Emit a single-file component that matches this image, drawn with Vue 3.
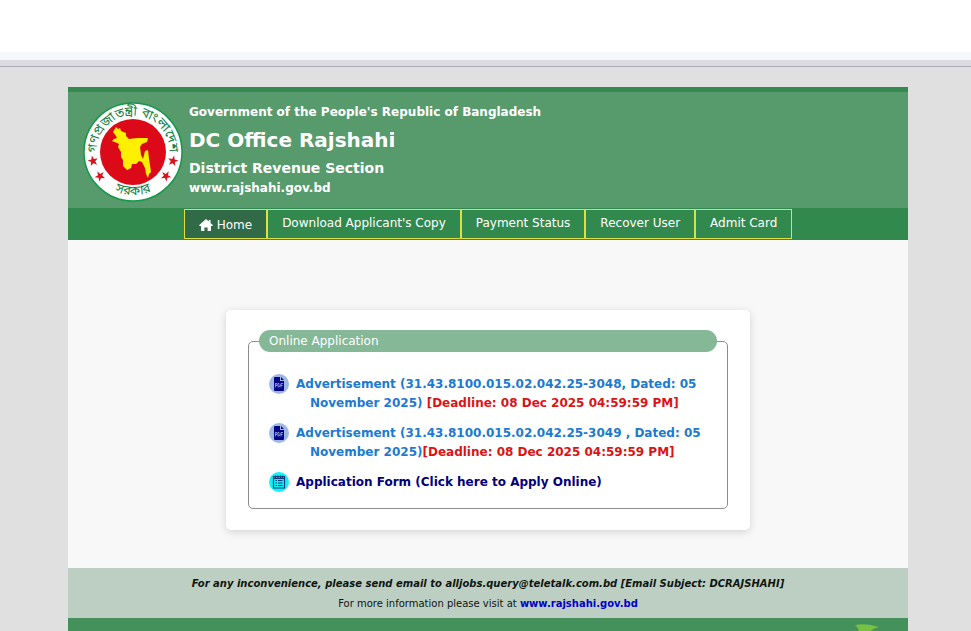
<template>
  <div class="shell">
    <div class="topbar">
      <div class="topbar__tabs"></div>
      <div class="topbar__edge"></div>
    </div>

    <div class="page">
      <header class="header">
        <svg class="header__seal" viewBox="0 0 100 100" role="img" aria-label="Government seal">
          <defs>
            <path id="arc-top" d="M14 56 A36.500 36.500 0 1 1 86 56" />
            <path id="arc-bottom" d="M7 50 A43 43 0 0 0 93 50" />
          </defs>
          <circle cx="50" cy="50" r="49" fill="#fff" stroke="#16984a" stroke-width="1.500" />
          <circle cx="50" cy="50" r="33" fill="#dc0a18" />
          <path
            fill="#ffef00"
            d="M33 25 L35 27 L37 26 L38 29 L43 31 L43 34 L46 37 L54 36 L65 36 L64 40 L59 42 L57 45 L58 53 L60 57 L62 49 L65 48 L66 57 L67 63 L68 70 L66 72 L65 76 L63 72 L62 66 L59 60 L56 59 L53 62 L49 62 L48 66 L44 68 L40 64 L40 58 L38 55 L38 50 L35 45 L36 42 L34 41 L29 39 L31 37 L34 36 L33 34 L30 30 Z"
          />
          <g fill="#d9141e">
            <path
              v-for="star in stars"
              :key="star.x + '-' + star.y"
              :transform="`translate(${star.x} ${star.y}) rotate(${star.turn})`"
              d="M0 -5.500 L1.300 -1.700 L5.200 -1.700 L2.100 .7 L3.200 4.500 L0 2.200 L-3.200 4.500 L-2.100 .7 L-5.200 -1.700 L-1.300 -1.700 Z"
            />
          </g>
          <text class="header__script">
            <textPath href="#arc-top" startOffset="50%" text-anchor="middle">গণপ্রজাতন্ত্রী বাংলাদেশ</textPath>
          </text>
          <text class="header__script">
            <textPath href="#arc-bottom" startOffset="50%" text-anchor="middle">সরকার</textPath>
          </text>
        </svg>
        <div class="header__titles">
          <p class="header__gov">Government of the People's Republic of Bangladesh</p>
          <h1 class="header__office">DC Office Rajshahi</h1>
          <h2 class="header__section">District Revenue Section</h2>
          <p class="header__site">www.rajshahi.gov.bd</p>
        </div>
      </header>

      <nav class="nav">
        <a
          v-for="item in menu"
          :key="item.label"
          class="nav__item"
          :class="{ 'nav__item--active': item.active }"
          href="#"
        >
          <svg v-if="item.active" class="nav__icon" viewBox="0 0 14 12" aria-hidden="true">
            <path
              fill="currentColor"
              d="M7 0 L9.800 2.500 V1 H11.500 V4 L14 6.300 L13.200 7 H12 V11.300 Q12 12 11.300 12 H8.600 V8.500 H5.400 V12 H2.700 Q2 12 2 11.300 V7 H.8 L0 6.300 Z"
            />
          </svg>
          {{ item.label }}
        </a>
      </nav>

      <main class="main">
        <section class="card">
          <fieldset class="box">
            <legend class="box__title">Online Application</legend>
            <ul class="list">
              <li v-for="ad in adverts" :key="ad.text" class="list__row">
                <svg class="list__icon" viewBox="0 0 20 20" aria-hidden="true">
                  <circle cx="10" cy="10" r="10" fill="#9db9e3" />
                  <path fill="#00008b" d="M6 3 H11 V7 H15 V16 Q15 17 14 17 H6 Q5 17 5 16 V4 Q5 3 6 3 Z M12 3 L15 6 H12 Z" />
                  <path
                    fill="none"
                    stroke="#9db9e3"
                    stroke-width=".8"
                    d="M6.400 13.500 V9.500 H8 V11.500 H6.400 M9 9.500 V13 H10 L11 12 V10.500 L10 9.500 H9 M12 13.500 V9.500 H14 M12 11.500 H13.600"
                  />
                </svg>
                <a class="list__link" href="#">
                  {{ ad.text }}<span class="list__deadline">{{ ad.deadline }}</span>
                </a>
              </li>
              <li class="list__row">
                <svg class="list__icon" viewBox="0 0 20 20" aria-hidden="true">
                  <circle cx="10" cy="10" r="10" fill="#0ff2f8" />
                  <path
                    fill="none"
                    stroke="#0a3b7c"
                    stroke-width="1.200"
                    d="M4.500 4.500 H15.500 V16 H4.500 Z M5 6.300 H15 M6.500 3.500 V6 M9 3.500 V6 M11.500 3.500 V6 M13.500 3.500 V6"
                  />
                  <path fill="none" stroke="#0a3b7c" d="M6.500 8.500 H8 M9 8.500 H13.500 M6.500 11 H8 M9 11 H13.500 M6.500 13.500 H8 M9 13.500 H13.500" />
                </svg>
                <a class="list__link list__link--form" href="#">Application Form (Click here to Apply Online)</a>
              </li>
            </ul>
          </fieldset>
        </section>
      </main>

      <section class="contact">
        <p class="contact__mail">
          For any inconvenience, please send email to alljobs.query@teletalk.com.bd [Email Subject: DCRAJSHAHI]
        </p>
        <p class="contact__more">
          For more information please visit at <a class="contact__link" href="#">www.rajshahi.gov.bd</a>
        </p>
      </section>

      <footer class="footer">
        <svg class="footer__leaf" viewBox="0 0 24 24" aria-hidden="true">
          <path fill="#78c143" d="M0 1 Q12 -1 24 3 Q17 5 15 8 Q10 13 5 16 Q3 12 4 8 Q3 3 0 1 Z" />
        </svg>
      </footer>
    </div>
  </div>
</template>

<script setup>
const menu = [
  { label: 'Home', active: true },
  { label: "Download Applicant's Copy" },
  { label: 'Payment Status' },
  { label: 'Recover User' },
  { label: 'Admit Card' }
]

const adverts = [
  {
    text: 'Advertisement (31.43.8100.015.02.042.25-3048, Dated: 05 November 2025) ',
    deadline: '[Deadline: 08 Dec 2025 04:59:59 PM]'
  },
  {
    text: 'Advertisement (31.43.8100.015.02.042.25-3049 , Dated: 05 November 2025)',
    deadline: '[Deadline: 08 Dec 2025 04:59:59 PM]'
  }
]

const stars = [
  { x: 10, y: 59, turn: -12 },
  { x: 17, y: 74, turn: -30 },
  { x: 90, y: 59, turn: 12 },
  { x: 83, y: 74, turn: 30 }
]
</script>

<style>
body {
  margin: 0;
  background: #e0e0e0;
}
</style>

<style scoped>
.shell {
  display: flex;
  flex-direction: column;
  min-height: 100vh;
  font-family: 'DejaVu Sans', Verdana, sans-serif;
  font-size: 12px;
}

/* ── Top strip ── */
.topbar {
  border-bottom: 1px solid #acacb6;
  background: #fff;
}

.topbar__tabs {
  height: 52px;
}

.topbar__edge {
  height: 8px;
  background: #f5f7fa;
  border-bottom: 6px solid #dbdbe1;
}

/* ── Page ── */
.page {
  display: flex;
  flex: 1;
  flex-direction: column;
  box-sizing: border-box;
  width: 100%;
  max-width: 845px;
  margin: 20px auto 0;
  padding-left: 5px;
}

.header {
  display: flex;
  align-items: flex-start;
  gap: 6px;
  padding: 10px 15px 6px;
  border-top: 5px solid #348a50;
  background: #579b6d;
  color: #fff;
}

.header__seal {
  flex-shrink: 0;
  width: 100px;
  height: 100px;
}

.header__script {
  fill: #14803f;
  font-family: 'Noto Sans Bengali', 'Noto Sans', sans-serif;
  font-size: 13px;
}

.header__titles {
  font-weight: 700;
}

.header__titles > * {
  margin: 0;
}

.header__gov,
.header__site {
  line-height: 20px;
}

.header__office {
  font-size: 20px;
  line-height: 36px;
}

.header__section {
  font-size: 14px;
  line-height: 20px;
}

/* ── Nav ── */
.nav {
  display: flex;
  justify-content: center;
  padding: 1px 0;
  background: #32894d;
}

.nav__item {
  display: flex;
  align-items: center;
  gap: 4px;
  padding: 3px 14px 5px;
  border: 1px solid #dbe046;
  color: #fff;
  line-height: 20px;
  text-decoration: none;
}

.nav__item--active {
  padding: 5px 14px 3px;
  background: #306a47;
}

.nav__icon {
  width: 14px;
  height: 12px;
}

/* ── Card ── */
.main {
  padding: 70px 158px 38px;
  background: #f8f8f8;
}

.card {
  padding: 20px 22px 21px;
  border-radius: 5px;
  background: #fff;
  box-shadow: 0 2px 8px rgba(0, 0, 0, 0.15);
}

.box {
  min-width: 0;
  margin: 0;
  padding: 19px 10px 16px;
  border: 1px solid #8c8c8c;
  border-radius: 5px;
}

.box__title {
  box-sizing: border-box;
  width: 100%;
  padding: 0 10px;
  border-radius: 11px;
  background: #85b896;
  color: #fff;
  line-height: 22px;
}

.list {
  display: flex;
  flex-direction: column;
  gap: 10px;
  margin: 0;
  padding: 3px 10px 0;
  list-style: none;
}

.list__row {
  display: flex;
  gap: 7px;
}

.list__icon {
  flex-shrink: 0;
  width: 20px;
  height: 20px;
}

.list__link {
  padding: 1px 0 0 14px;
  color: #1b7ad2;
  font-weight: 700;
  line-height: 19px;
  text-decoration: none;
  text-indent: -14px;
}

.list__link--form {
  color: #00007b;
}

.list__deadline {
  color: #d91414;
}

/* ── Contact ── */
.contact {
  padding: 6px 0 4px;
  background: #bdcfc3;
  color: #101510;
  font-size: 10px;
  line-height: 20px;
  text-align: center;
}

.contact__mail,
.contact__more {
  margin: 0;
}

.contact__mail {
  font-style: italic;
  font-weight: 700;
}

.contact__link {
  color: #0000c8;
  font-weight: 700;
  text-decoration: none;
}

/* ── Footer ── */
.footer {
  display: flex;
  flex: 1;
  justify-content: flex-end;
  height: 0;
  min-height: 13px;
  max-height: 40px;
  padding-right: 29px;
  overflow: hidden;
  background: #44915b;
}

.footer__leaf {
  width: 24px;
  height: 24px;
  margin-top: 6px;
}
</style>
